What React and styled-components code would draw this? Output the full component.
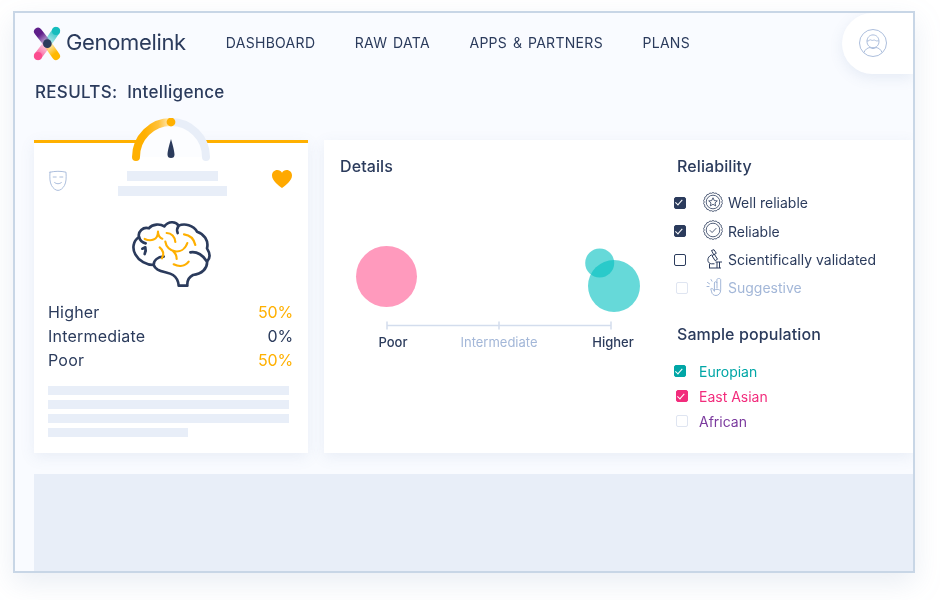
import React from "react";
import { createGlobalStyle, styled } from "styled-components";

const navy = "#2b3b5c";
const amber = "#ffb000";
const mist = "#e8eef8";
const pale = "#a3b7d8";

const GlobalStyle = createGlobalStyle`
  html {
    background: #fff;
  }
  body {
    box-sizing: border-box;
    min-height: 600px;
    margin: 0;
    padding: 11px 0 0 13px;
    font-family: "Inter", "Liberation Sans", sans-serif;
    color: ${navy};
  }
`;

const Logo = () => (
  <LogoSvg viewBox="0 0 120 132">
    <defs>
      <linearGradient id="lgPurple" x1="24" y1="32" x2="56" y2="72" gradientUnits="userSpaceOnUse">
        <stop offset="0.2" stopColor="#5f1f8a" />
        <stop offset="1" stopColor="#5f1f8a" stopOpacity="0.1" />
      </linearGradient>
      <linearGradient id="lgTeal" x1="78" y1="30" x2="50" y2="72" gradientUnits="userSpaceOnUse">
        <stop offset="0.2" stopColor="#14bdbd" stopOpacity="0.75" />
        <stop offset="1" stopColor="#14bdbd" stopOpacity="0.15" />
      </linearGradient>
      <linearGradient id="lgPink" x1="24" y1="106" x2="54" y2="66" gradientUnits="userSpaceOnUse">
        <stop offset="0.15" stopColor="#fb4c8f" stopOpacity="0.8" />
        <stop offset="1" stopColor="#fb4c8f" stopOpacity="0.1" />
      </linearGradient>
      <linearGradient id="lgYellow" x1="80" y1="106" x2="50" y2="68" gradientUnits="userSpaceOnUse">
        <stop offset="0.2" stopColor="#ffb800" />
        <stop offset="1" stopColor="#ffb800" stopOpacity="0.1" />
      </linearGradient>
    </defs>
    <line x1="78" y1="30" x2="52" y2="68" stroke="url(#lgTeal)" strokeWidth="24" strokeLinecap="round" />
    <line x1="24" y1="105" x2="52" y2="68" stroke="url(#lgPink)" strokeWidth="24" strokeLinecap="round" />
    <line x1="24" y1="32" x2="52" y2="68" stroke="url(#lgPurple)" strokeWidth="24" strokeLinecap="round" />
    <line x1="78" y1="105" x2="52" y2="68" stroke="url(#lgYellow)" strokeWidth="24" strokeLinecap="round" />
    <circle cx="78" cy="30" r="12" fill="#14bdbd" />
    <circle cx="24" cy="105" r="12" fill="#fb4c8f" />
    <circle cx="52" cy="68" r="13" fill={navy} />
  </LogoSvg>
);

const Avatar = () => (
  <svg width="30" height="30" viewBox="0 0 30 30" fill="none" stroke={pale} strokeWidth="0.9">
    <circle cx="15" cy="15" r="13.5" />
    <path d="M9 13.5c0-4 2.6-6.6 6-6.6s6 2.6 6 6.6c0 3.8-2.8 6.2-6 6.2s-6-2.4-6-6.2z" />
    <path d="M8.8 13c1.8.6 2.8-1.4 3.6-1.2 1 .3 1.6 1 3 .4 1.4-.6 2 .6 3 .7 1 .1 1.7-.2 2.5.1" />
    <path d="M6 24.5c1-3 3.4-4.6 6-5 1.6 1.4 4.4 1.4 6 0 2.6.4 5 2 6 5" />
  </svg>
);

const Gauge = () => (
  <GaugeSvg viewBox="0 0 86 50">
    <defs>
      <linearGradient id="gaugeFill" x1="8" y1="0" x2="43" y2="0" gradientUnits="userSpaceOnUse">
        <stop offset="0.25" stopColor="#ffb000" />
        <stop offset="0.65" stopColor="#ffc23d" />
        <stop offset="1" stopColor="#ffeec4" />
      </linearGradient>
    </defs>
    <path d="M8 39a35 35 0 0 1 70 0z" fill="#fcfdff" />
    <path d="M43 4a35 35 0 0 1 35 35" fill="none" stroke={mist} strokeWidth="8" strokeLinecap="round" />
    <path d="M8 39a35 35 0 0 1 35-35" fill="none" stroke="url(#gaugeFill)" strokeWidth="8" strokeLinecap="round" />
    <circle cx="43" cy="4" r="4.4" fill={amber} />
    <path d="M43 21c.9 3 3.5 12 3.5 15.500a3.500 3.500 0 0 1-7 0c0-3.500 2.600-12.500 3.500-15.500z" fill={navy} />
  </GaugeSvg>
);

const Mask = () => (
  <svg width="20" height="22" viewBox="0 0 20 22" fill="none" stroke={pale} strokeWidth="0.9" strokeLinecap="round">
    <path d="M2 2.2c5-1.2 11-1.2 16 0 .4 6 .2 10-1.6 13.4-1.6 2.8-4 4.8-6.4 4.8s-4.800-2-6.400-4.800C1.800 12.200 1.600 8.200 2 2.200z" />
    <path d="M5.200 7h3M11.800 7h3" />
    <path d="M6.600 12.600c2 1.600 4.800 1.600 6.800 0" />
  </svg>
);

const Heart = () => (
  <HeartSvg viewBox="0 0 20 18">
    <path d="M10 18C6.500 15.200 0 10.600 0 5.400 0 2.300 2.400 0 5.300 0 7.300 0 9 1 10 2.800 11 1 12.700 0 14.700 0 17.600 0 20 2.300 20 5.400 20 10.600 13.500 15.200 10 18z" fill="#ffa900" />
  </HeartSvg>
);

const Brain = () => (
  <svg width="86" height="76" viewBox="0 0 258 228" fill="none" strokeLinecap="round" strokeLinejoin="round">
    <g stroke={navy} strokeWidth="8">
      <path d="M155 212C154 198 150 188 138 180 126 172 106 172 92 164 86 160 82 156 80 150 58 150 36 138 25 118 15 100 18 78 36 66 32 50 48 34 66 40 76 26 100 26 112 34 124 18 146 18 155 32 172 24 200 30 210 50 230 56 246 76 240 100 250 116 250 130 240 140 242 160 224 178 198 180 186 186 180 198 181 212z" />
      <path d="M155 32c-5 7-6 15-3 22" />
      <path d="M36 66c3 10 10 17 20 19" />
      <path d="M46 101l9-4c2 6 1 13-2 20" />
      <path d="M80 150c0-14 12-24 30-25" />
      <path d="M240 140c-10-18-30-32-50-28" />
    </g>
    <g stroke={amber} strokeWidth="6.500">
      <path d="M53 72c18 8 40 4 40-22" />
      <path d="M93 52c1 10 6 17 13 19" />
      <path d="M119 54c14 0 25 11 26 27" />
      <path d="M115 80c4 32 52 44 66 4" />
      <path d="M171 58c18 2 30 14 34 32" />
      <path d="M139 109c7 6 10 14 10 23" />
      <path d="M98 97c10 8 14 20 7 33" />
      <path d="M140 148c16 8 34 6 45-8" />
    </g>
  </svg>
);

// scalloped ring round the two reliability seals
const sealPath = (() => {
  const teeth = 18;
  const point = (angle, r) => `${(10 + r * Math.cos(angle)).toFixed(2)} ${(10 + r * Math.sin(angle)).toFixed(2)}`;
  let d = `M${point(0, 8.8)}`;
  for (let i = 0; i < teeth; i++) {
    const step = (Math.PI * 2) / teeth;
    d += `Q${point(step * (i + 0.5), 10.4)} ${point(step * (i + 1), 8.8)}`;
  }
  return d + "z";
})();

const StarSeal = () => (
  <svg width="20" height="20" viewBox="0 0 20 20" fill="none" stroke={navy} strokeWidth="0.8">
    <path d={sealPath} />
    <circle cx="10" cy="10" r="6.800" />
    <path d="M10 5.800l1.300 2.800 3 .3-2.300 2 .7 3L10 12.300l-2.700 1.600.7-3-2.300-2 3-.3z" />
  </svg>
);

const CheckSeal = () => (
  <svg width="20" height="20" viewBox="0 0 20 20" fill="none" stroke={navy} strokeWidth="0.8">
    <path d={sealPath} />
    <circle cx="10" cy="10" r="6.800" />
    <path d="M6.800 10.200l2.300 2.300 4.200-4.400" />
  </svg>
);

const Microscope = () => (
  <svg width="20" height="20" viewBox="0 0 20 20" fill="none" stroke={navy} strokeWidth="1" strokeLinejoin="round">
    <g transform="translate(1.500 0)">
      <path d="M7 1.500l2.500-.8 2.300 3.600-2.500 1.500z" />
      <path d="M9.800 5.200l3.200 5-2.400 1.500-3.100-5z" />
      <path d="M7.300 5.800C4.600 6.800 3.200 9 3.400 11.400c.2 2 1.700 3.400 3.600 3.400h3" />
      <path d="M11 13h6.500" />
      <path d="M4.500 19h12M12.500 13v6M15 13v6" />
      <path d="M5 15v4" />
    </g>
  </svg>
);

const Hand = () => (
  <svg width="20" height="20" viewBox="0 0 20 20" fill="none" stroke={pale} strokeWidth="1" strokeLinecap="round" strokeLinejoin="round">
    <g transform="translate(3 0)">
      <path d="M13.200 1.500c.9 0 1.500.6 1.500 1.400v10c0 3.200-2 5.600-4.700 5.600-2.300 0-4-1.400-4.400-3.600L4.800 11.800c1-.8 2-.2 2.600.8l1 1.800V6c0-.8.600-1.300 1.200-1.300s1.300.5 1.300 1.300V3c0-.9.600-1.500 1.300-1.500z" />
      <path d="M11 6v5M8.500 13c1.500-1 3.500-1 5 0" />
      <path d="M1 9.500h2M1.500 5.500l2 1.300M5 2.500l1 1.700" />
    </g>
  </svg>
);

const Plot = () => (
  <svg width="310" height="100" viewBox="0 0 310 100">
    <circle cx="46.500" cy="36.500" r="30.500" fill="#ff9abd" />
    <circle cx="274" cy="46" r="26" fill="#00bfbf" fillOpacity="0.6" />
    <circle cx="259.700" cy="23" r="14.500" fill="#00bfbf" fillOpacity="0.6" />
    <g stroke="#d3dded" strokeWidth="1.500">
      <path d="M47 85.500h224" />
      <path d="M47 81.500v8M159 81.500v8M271 81.500v8" />
    </g>
  </svg>
);

const reliability = [
  { label: "Well reliable", icon: <StarSeal />, checked: true },
  { label: "Reliable", icon: <CheckSeal />, checked: true },
  { label: "Scientifically validated", icon: <Microscope />, checked: false },
  { label: "Suggestive", icon: <Hand />, checked: false, faded: true },
];

const population = [
  { label: "Europian", color: "#00a6a6", checked: true },
  { label: "East Asian", color: "#f22c7c", checked: true, inset: true },
  { label: "African", color: "#7b3a9e", checked: false, inset: true },
];

const scores = [
  { label: "Higher", value: "50%", hot: true },
  { label: "Intermediate", value: "0%" },
  { label: "Poor", value: "50%", hot: true },
];

const App = () => (
  <>
    <GlobalStyle />
    <Frame>
      <Header>
        <Brand>
          <Logo />
          <BrandName>Genomelink</BrandName>
        </Brand>
        <Nav>
          <NavLink>DASHBOARD</NavLink>
          <NavLink>RAW DATA</NavLink>
          <NavLink>APPS &amp; PARTNERS</NavLink>
          <NavLink>PLANS</NavLink>
        </Nav>
        <AvatarTab>
          <Avatar />
        </AvatarTab>
      </Header>
      <Main>
        <Title>RESULTS:&nbsp; Intelligence</Title>
        <Cards>
          <TraitCard>
            <Gauge />
            <TraitTop>
              <Mask />
              <TraitBars>
                <Bar $width={91} />
                <Bar $width={109} />
              </TraitBars>
              <Heart />
            </TraitTop>
            <BrainWrap>
              <Brain />
            </BrainWrap>
            <Scores>
              {scores.map((s) => (
                <ScoreRow key={s.label}>
                  <span>{s.label}</span>
                  <ScoreValue $hot={s.hot}>{s.value}</ScoreValue>
                </ScoreRow>
              ))}
            </Scores>
            <TextBars>
              <Bar $width={241} />
              <Bar $width={241} />
              <Bar $width={241} />
              <Bar $width={140} />
            </TextBars>
          </TraitCard>
          <DetailsCard>
            <ChartCol>
              <Heading>Details</Heading>
              <PlotWrap>
                <Plot />
              </PlotWrap>
              <AxisLabels>
                <AxisLabel>Poor</AxisLabel>
                <AxisLabel $muted>Intermediate</AxisLabel>
                <AxisLabel>Higher</AxisLabel>
              </AxisLabels>
            </ChartCol>
            <SideCol>
              <Heading>Reliability</Heading>
              <ReliabilityList>
                {reliability.map((r) => (
                  <ReliabilityRow key={r.label} $faded={r.faded}>
                    <Check $checked={r.checked} $color={navy} $inset={r.faded} $faded={r.faded} />
                    {r.icon}
                    <span>{r.label}</span>
                  </ReliabilityRow>
                ))}
              </ReliabilityList>
              <PopulationHeading>Sample population</PopulationHeading>
              <PopulationList>
                {population.map((p) => (
                  <PopulationRow key={p.label} $color={p.color}>
                    <Check $checked={p.checked} $color={p.color} $inset={p.inset} $faded={!p.checked} />
                    <span>{p.label}</span>
                  </PopulationRow>
                ))}
              </PopulationList>
            </SideCol>
          </DetailsCard>
        </Cards>
        <BottomBlock />
      </Main>
    </Frame>
  </>
);

export default App;

const Frame = styled.div`
  box-sizing: border-box;
  width: 902px;
  height: 562px;
  display: flex;
  flex-direction: column;
  overflow: hidden;
  border: 2px solid #c8d6e6;
  background: #f9fbff;
  filter: drop-shadow(0 10px 14px rgba(90, 120, 170, 0.13));
`;

const Header = styled.header`
  box-sizing: border-box;
  height: 61px;
  flex: none;
  display: flex;
  align-items: center;
  padding: 0 0 3px 19px;
`;

const Brand = styled.div`
  display: flex;
  align-items: center;
`;

const LogoSvg = styled.svg`
  width: 40px;
  height: 44px;
  margin: 1px -4px 0 -4px;
`;

const BrandName = styled.div`
  font-size: 22px;
  letter-spacing: -0.35px;
  color: ${navy};
`;

const Nav = styled.nav`
  display: flex;
  gap: 39.5px;
  margin-left: 40px;
`;

const NavLink = styled.a`
  font-size: 14px;
  letter-spacing: 0.3px;
  word-spacing: 1.5px;
  color: ${navy};
`;

const AvatarTab = styled.div`
  align-self: flex-start;
  width: 71px;
  height: 61px;
  margin-left: auto;
  padding: 0 0 1px 16px;
  box-sizing: border-box;
  display: flex;
  align-items: center;
  background: #fff;
  border-radius: 31px 0 0 31px;
  box-shadow: 0 4px 14px rgba(90, 120, 170, 0.12);
`;

const Main = styled.main`
  flex: 1;
  display: flex;
  flex-direction: column;
  padding-left: 19px;
`;

const Title = styled.h1`
  margin: 8px 0 38px 1px;
  font-size: 17px;
  line-height: 20px;
  font-weight: 500;
  letter-spacing: 0.3px;
  color: ${navy};
`;

const Cards = styled.div`
  display: flex;
  gap: 16px;
  height: 313px;
  flex: none;
`;

const TraitCard = styled.section`
  position: relative;
  box-sizing: border-box;
  width: 274px;
  flex: none;
  padding: 27px 15px 0 14px;
  background: #fff;
  border-top: 3px solid ${amber};
  box-shadow: 0 4px 14px rgba(90, 120, 170, 0.1);
`;

const GaugeSvg = styled.svg`
  position: absolute;
  left: 94px;
  top: -25px;
  width: 86px;
  height: 50px;
`;

const TraitTop = styled.div`
  display: flex;
  justify-content: space-between;
  align-items: flex-start;
`;

const HeartSvg = styled.svg`
  width: 20px;
  height: 18px;
  margin-right: 1px;
`;

const TraitBars = styled.div`
  display: flex;
  flex-direction: column;
  align-items: center;
  gap: 5px;
  margin: 1px 0 0 4px;
  & > div {
    height: 10px;
  }
`;

const Bar = styled.div`
  width: ${(p) => p.$width}px;
  height: 9px;
  background: ${mist};
`;

const BrainWrap = styled.div`
  display: flex;
  justify-content: center;
  margin: 19px 1px 0 0;
  height: 76px;
`;

const Scores = styled.div`
  margin-top: 9px;
`;

const ScoreRow = styled.div`
  display: flex;
  justify-content: space-between;
  font-size: 16px;
  line-height: 24px;
  letter-spacing: 0.2px;
  color: ${navy};
`;

const ScoreValue = styled.span`
  letter-spacing: -0.2px;
  color: ${(p) => (p.$hot ? "#ffb000" : navy)};
`;

const TextBars = styled.div`
  display: flex;
  flex-direction: column;
  gap: 5px;
  margin-top: 14px;
`;

const DetailsCard = styled.section`
  flex: 1;
  display: flex;
  padding: 16px 0 0 16px;
  background: #fff;
  box-shadow: 0 4px 14px rgba(90, 120, 170, 0.1);
`;

const ChartCol = styled.div`
  width: 337px;
  flex: none;
`;

const SideCol = styled.div`
  flex: 1;
`;

const Heading = styled.h2`
  margin: 0;
  font-size: 16px;
  line-height: 20px;
  font-weight: 500;
  letter-spacing: 0.1px;
  color: ${navy};
`;

const PlotWrap = styled.div`
  margin-top: 64px;
  height: 94px;
`;

const AxisLabels = styled.div`
  display: grid;
  grid-template-columns: 106px 106px 122px;
`;

const AxisLabel = styled.div`
  text-align: center;
  font-size: 13px;
  line-height: 16px;
  font-weight: ${(p) => (p.$muted ? 400 : 500)};
  color: ${(p) => (p.$muted ? pale : navy)};
`;

const Check = styled.span`
  box-sizing: border-box;
  position: relative;
  display: block;
  width: 12px;
  height: 12px;
  margin-left: ${(p) => (p.$inset ? 2 : 0)}px;
  border-radius: 2px;
  background: ${(p) => (p.$checked ? p.$color : "#fff")};
  border: 1.5px solid ${(p) => (p.$checked ? p.$color : p.$faded ? "#dfe5f1" : navy)};
  &::after {
    content: "";
    display: ${(p) => (p.$checked ? "block" : "none")};
    position: absolute;
    left: 2.4px;
    top: 0.6px;
    width: 3px;
    height: 5.500px;
    border: solid #fff;
    border-width: 0 1.300px 1.300px 0;
    transform: rotate(42deg);
  }
`;

const ReliabilityList = styled.div`
  margin: 12.6px 0 0 -3px;
`;

const ReliabilityRow = styled.div`
  height: 28.4px;
  display: grid;
  grid-template-columns: 29px 25px 1fr;
  align-items: center;
  font-size: 14px;
  color: ${(p) => (p.$faded ? pale : navy)};
  svg {
    margin-top: -2px;
  }
`;

const PopulationHeading = styled(Heading)`
  margin-top: 21.4px;
`;

const PopulationList = styled.div`
  margin: 15px 0 0 -3px;
`;

const PopulationRow = styled.div`
  height: 25px;
  display: grid;
  grid-template-columns: 25px 1fr;
  align-items: center;
  font-size: 14px;
  color: ${(p) => p.$color};
`;

const BottomBlock = styled.div`
  flex: 1;
  margin-top: 21px;
  background: ${mist};
`;
